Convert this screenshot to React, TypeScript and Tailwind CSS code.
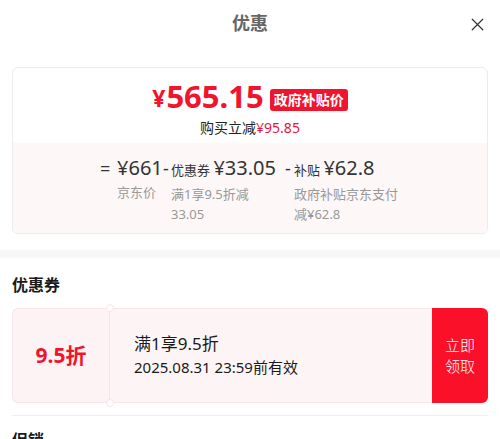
import { X } from "lucide-react";

const FONT = { fontFamily: '"Noto Sans", "Noto Sans CJK SC", sans-serif' };

function Notch({ pos }: { pos: "top" | "bottom" }) {
  return (
    <span
      className={`absolute left-[-4px] w-2 h-2 rounded-full bg-white border border-[#f6e6e8] ${
        pos === "top" ? "top-[-5px]" : "bottom-[-5px]"
      }`}
    />
  );
}

export default function App() {
  return (
    <div className="w-[500px] h-[439px] overflow-hidden bg-white text-[#1a1a1a]" style={FONT}>
      {/* Cabecera */}
      <div className="relative h-[46px] flex items-center justify-center">
        <span className="text-[18px] font-bold text-[#666]">优惠</span>
        <X className="absolute right-[12px] top-[14px] w-[21px] h-[21px] text-[#333]" strokeWidth={1.4} />
      </div>

      {/* Resumen de precio */}
      <div className="px-3 pt-[21px]">
        <div className="border border-[#ececec] rounded-md overflow-hidden">
          <div className="h-[75px] flex flex-col items-center pt-[12px]">
            <div className="flex items-end leading-none">
              <span className="text-[23px] font-bold text-[#f0142d] mb-[2px] mr-[1px]">¥</span>
              <span className="text-[31px] font-bold text-[#f0142d] leading-[32px]">565.15</span>
              <span className="ml-[6px] mb-[1px] px-[4px] h-[22px] flex items-center rounded-[3px] bg-[#f0142d] text-white text-[14px] font-bold">
                政府补贴价
              </span>
            </div>
            <div className="mt-[6px] text-[14px] leading-[20px] text-[#222]">
              购买立减<span className="text-[#e5173a]">¥95.85</span>
            </div>
          </div>

          <div className="h-[90px] bg-[#fdf7f7] flex pt-[12px] pl-[87px]">
            <div className="flex">
              <span className="text-[18px] leading-[26px] text-[#333] w-[17px]">=</span>
              <div className="flex flex-col w-[46px]">
                <span className="text-[20px] leading-[26px] text-[#333] whitespace-nowrap">¥661</span>
                <span className="text-[13px] leading-[20px] text-[#999] mt-[1px]">京东价</span>
              </div>
            </div>
            <div className="flex">
              <span className="text-[18px] leading-[26px] text-[#333] w-[8px]">-</span>
              <div className="flex flex-col w-[114px]">
                <span className="leading-[26px] text-[#333] whitespace-nowrap">
                  <span className="text-[13px]">优惠券 </span>
                  <span className="text-[20px]">¥33.05</span>
                </span>
                <span className="text-[13px] leading-[20px] text-[#999] mt-[1px] w-[88px]">满1享9.5折减33.05</span>
              </div>
            </div>
            <div className="flex">
              <span className="text-[18px] leading-[26px] text-[#333] w-[9px]">-</span>
              <div className="flex flex-col w-[108px]">
                <span className="leading-[26px] text-[#333] whitespace-nowrap">
                  <span className="text-[13px]">补贴 </span>
                  <span className="text-[20px]">¥62.8</span>
                </span>
                <span className="text-[13px] leading-[20px] text-[#999] mt-[1px]">政府补贴京东支付减¥62.8</span>
              </div>
            </div>
          </div>
        </div>
      </div>

      <div className="mt-4 h-2 bg-[#f7f7fa]" />

      {/* Cupones */}
      <div className="px-3">
        <div className="h-[50px] flex items-center text-[16px] font-bold text-[#1a1a1a] pt-[3px]">优惠券</div>
        <div className="flex h-[95px]">
          <div className="w-[97px] bg-[#fdf3f4] border border-[#f6e6e8] border-r-0 rounded-l-md flex items-center justify-center">
            <span className="text-[21px] font-bold text-[#f0142d]">9.5折</span>
          </div>
          <div className="relative flex-1 bg-[#fdf5f5] border border-[#f6e6e8] border-r-0 flex flex-col justify-center pl-[24px] pb-[2px]">
            <Notch pos="top" />
            <Notch pos="bottom" />
            <span className="text-[17px] leading-[25px] text-[#1a1a1a]">满1享9.5折</span>
            <span className="text-[15px] leading-[23px] text-[#1a1a1a]">2025.08.31 23:59前有效</span>
          </div>
          <div className="w-[56px] bg-[#fa1029] rounded-r-md flex items-center justify-center">
            <span className="text-[15px] leading-[21px] text-white text-center font-light">
              立即
              <br />
              领取
            </span>
          </div>
        </div>
        <div className="mt-[12px] border-t border-[#eeeeee]" />
        <div className="pt-[12px] text-[16px] font-bold">促销</div>
      </div>
    </div>
  );
}
